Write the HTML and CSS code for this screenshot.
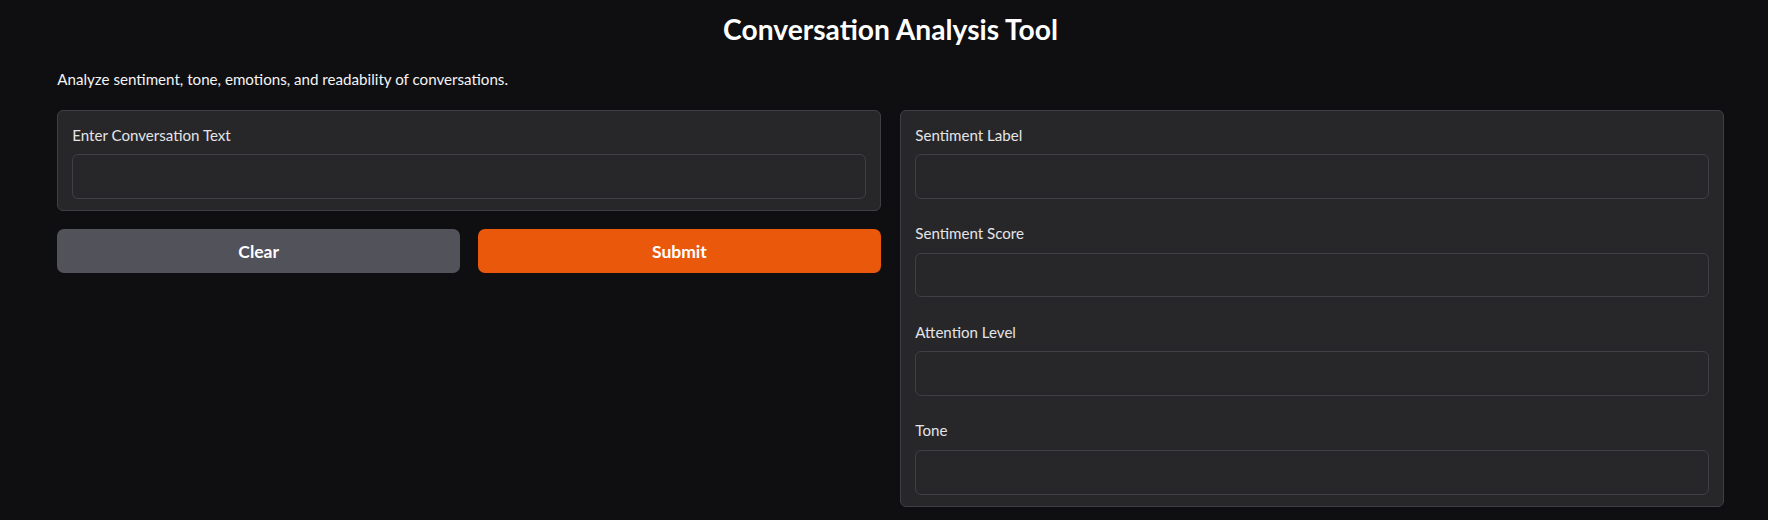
FILE: index.html
```html
<!DOCTYPE html>
<html lang="en">
<head>
<meta charset="utf-8">
<title>Conversation Analysis Tool</title>
<link rel="stylesheet" href="styles.css">
</head>
<body>
<div class="app">
  <h1 class="title">Conversation Analysis Tool</h1>
  <p class="desc">Analyze sentiment, tone, emotions, and readability of conversations.</p>
  <div class="main">
    <div class="col col-left">
      <div class="panel">
        <label class="block">
          <span class="label">Enter Conversation Text</span>
          <textarea class="field" rows="1"></textarea>
        </label>
      </div>
      <div class="buttons">
        <button class="btn btn-secondary" type="button">Clear</button>
        <button class="btn btn-primary" type="button">Submit</button>
      </div>
    </div>
    <div class="col col-right">
      <div class="panel">
        <label class="block">
          <span class="label">Sentiment Label</span>
          <textarea class="field" rows="1" readonly></textarea>
        </label>
        <label class="block">
          <span class="label">Sentiment Score</span>
          <textarea class="field" rows="1" readonly></textarea>
        </label>
        <label class="block">
          <span class="label">Attention Level</span>
          <textarea class="field" rows="1" readonly></textarea>
        </label>
        <label class="block">
          <span class="label">Tone</span>
          <textarea class="field" rows="1" readonly></textarea>
        </label>
      </div>
    </div>
  </div>
</div>
</body>
</html>
```

FILE: styles.css
```css
html, body {
  margin: 0;
  padding: 0;
  background: #0f0f11;
  color: #f4f4f5;
  font-family: Lato, "Liberation Sans", sans-serif;
}

.app {
  width: 1666.5px;
  margin-left: 57.3px;
  padding-top: 11.5px;
}

.title {
  margin: 0;
  text-align: center;
  font-size: 28.2px;
  line-height: 34px;
  font-weight: 700;
  color: #ffffff;
}

.desc {
  margin: 23px 0 0 0;
  font-size: 15.15px;
  line-height: 21px;
  color: #f4f4f5;
}

.main {
  display: flex;
  gap: 19.6px;
  align-items: flex-start;
  margin-top: 20.5px;
}

.col {
  flex: 1 1 0;
  min-width: 0;
  display: flex;
  flex-direction: column;
  gap: 18.33px;
}

.panel {
  background: #27272a;
  border: 1px solid #3f3f46;
  border-radius: 6px;
  display: flex;
  flex-direction: column;
}

.block {
  display: flex;
  flex-direction: column;
  padding: 13.5px 14px 11px 14px;
}

.label {
  font-size: 15.1px;
  line-height: 20px;
  color: #e4e4e7;
  margin-bottom: 9.5px;
}

.field {
  display: block;
  box-sizing: border-box;
  width: 100%;
  height: 44.67px;
  margin: 0;
  padding: 10px 12px;
  background: #27272a;
  border: 1px solid #3f3f46;
  border-radius: 6px;
  color: #f4f4f5;
  font-family: inherit;
  font-size: 15px;
  resize: none;
  outline: none;
}

.buttons {
  display: flex;
  gap: 18px;
}

.btn {
  flex: 1 1 0;
  height: 44.33px;
  border: none;
  border-radius: 7px;
  font-family: inherit;
  font-size: 17.5px;
  font-weight: 700;
  color: #ffffff;
  cursor: pointer;
}

.btn-secondary {
  background: #52525b;
}

.btn-primary {
  background: #ea580c;
}
```
